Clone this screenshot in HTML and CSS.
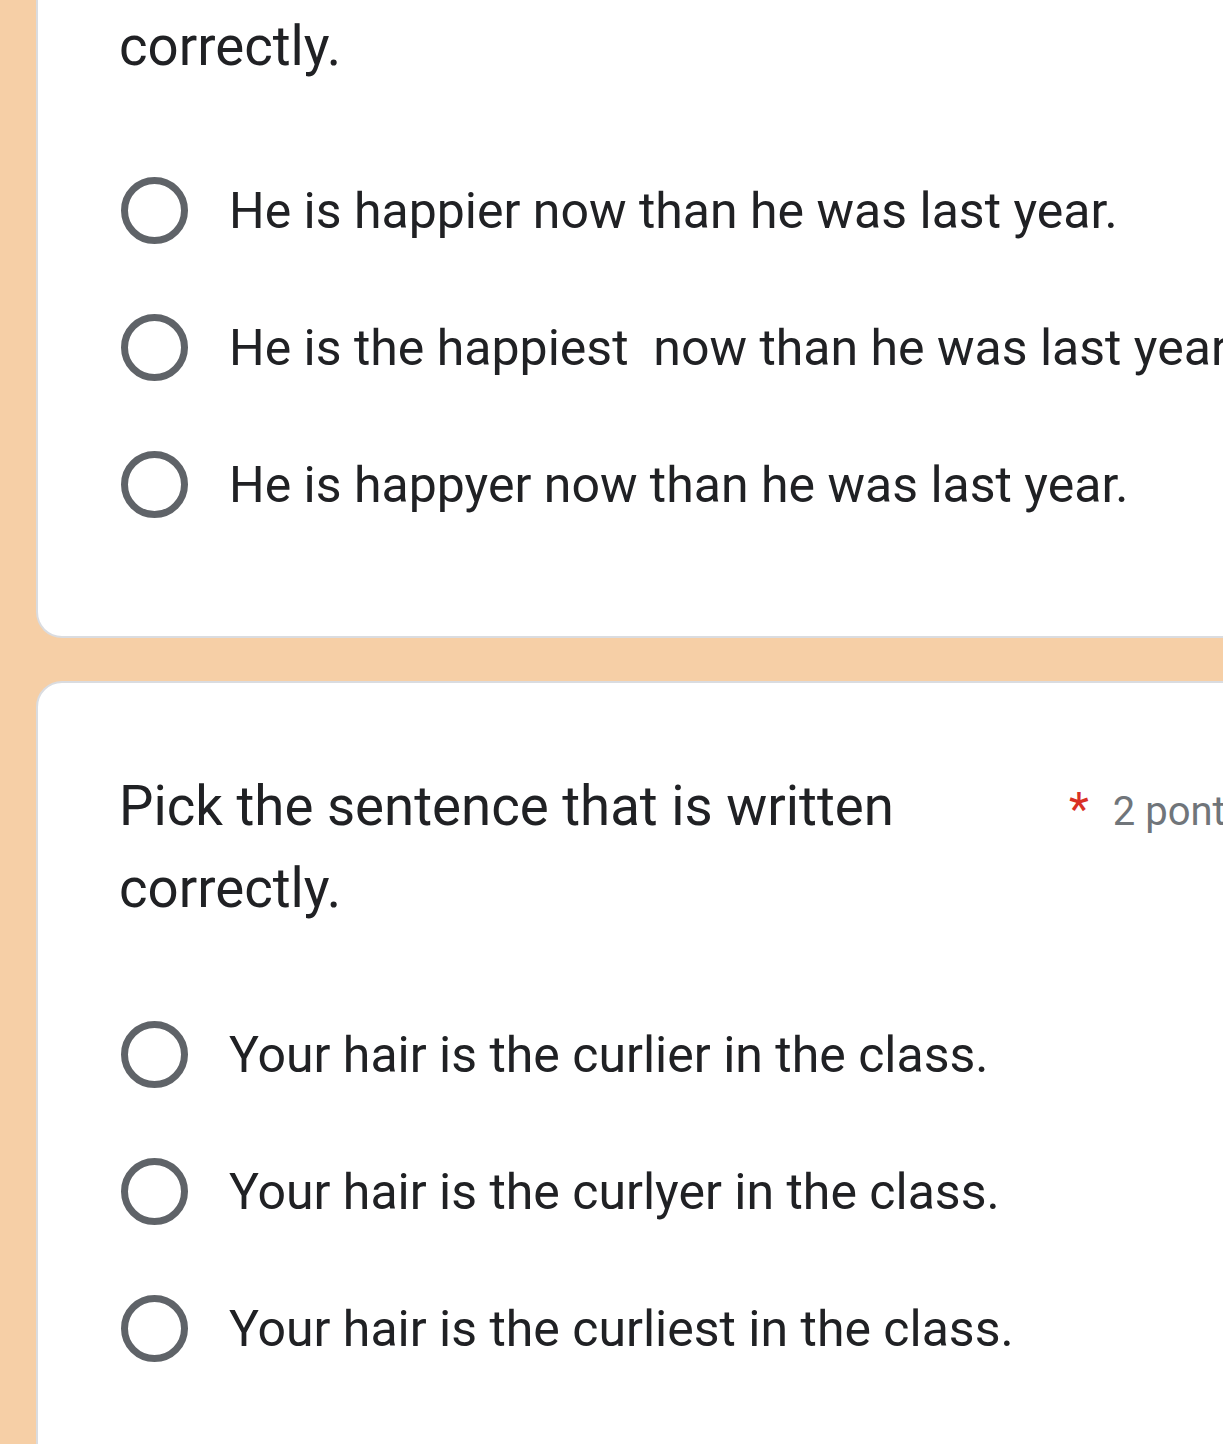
FILE: index.html
```html
<!doctype html>
<html>
<head>
<meta charset="utf-8">
<title>Quiz</title>
<link rel="stylesheet" href="styles.css">
</head>
<body>
<div class="form">
    <div class="card top">
        <div class="head">
            <div class="title">correctly.</div>
        </div>
        <ul class="opts">
            <li><span class="radio"></span>He is happier now than he was last year.</li>
            <li><span class="radio"></span>He is the happiest&nbsp; now than he was last year.</li>
            <li><span class="radio"></span>He is happyer now than he was last year.</li>
        </ul>
    </div>
    <div class="card">
        <div class="head">
            <div class="title">Pick the sentence that is written correctly.</div>
            <span class="req">*</span>
            <span class="points">2 pontos</span>
        </div>
        <ul class="opts">
            <li><span class="radio"></span>Your hair is the curlier in the class.</li>
            <li><span class="radio"></span>Your hair is the curlyer in the class.</li>
            <li><span class="radio"></span>Your hair is the curliest in the class.</li>
        </ul>
    </div>
</div>
</body>
</html>
```

FILE: styles.css
```css
*{
	margin:0px;
	padding:0px;
	box-sizing:border-box;
}
body{
	background:#f6cfa6;
	font-family:Roboto,"Liberation Sans",sans-serif;
	color:#202124;
	overflow:hidden;
}
.form{
	padding-left:36px;
	width:1700px;
	display:flex;
	flex-direction:column;
	gap:43px;
}
.card{
	background:#fff;
	border:2px solid #dadce0;
	border-radius:26px;
	padding:82px 81px;
}
.card.top{
	border-top:0;
	border-radius:0 0 26px 26px;
	padding-top:5px;
	padding-bottom:83px;
}
.head{
	display:flex;
	align-items:baseline;
	margin-bottom:57px;
}
.top .head{
	margin-bottom:55px;
}
.title{
	width:950px;
	font-size:54.6px;
	line-height:82px;
}
.req{
	color:#d93025;
	font-size:46px;
	margin-right:24px;
}
.points{
	color:#70757a;
	font-size:40px;
}
.opts{
	list-style:none;
}
.opts li{
	display:flex;
	align-items:center;
	height:137px;
	font-size:50px;
}
.radio{
	width:67px;
	height:67px;
	border:7px solid #5f6368;
	border-radius:50%;
	margin-left:2px;
	margin-right:41px;
	flex-shrink:0;
}
```
